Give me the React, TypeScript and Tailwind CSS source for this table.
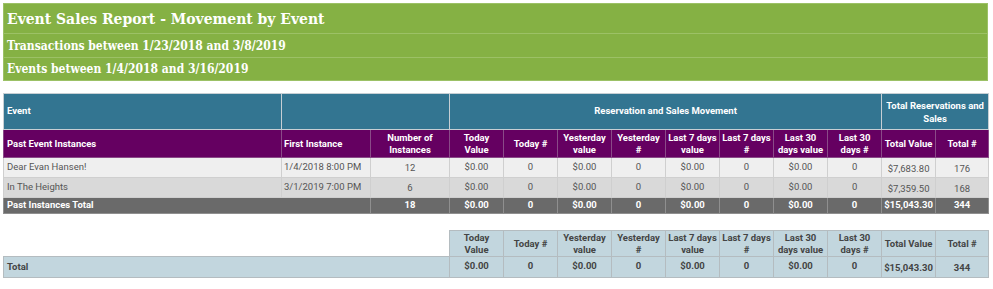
const movementCols = [
  ["Today", "Value"],
  ["Today #"],
  ["Yesterday", "value"],
  ["Yesterday", "#"],
  ["Last 7 days", "value"],
  ["Last 7 days", "#"],
  ["Last 30", "days value"],
  ["Last 30", "days #"],
];

const events = [
  { name: "Dear Evan Hansen!", first: "1/4/2018 8:00 PM", count: "12", total: "$7,683.80", totalNum: "176", bg: "bg-[#efefef]" },
  { name: "In The Heights", first: "3/1/2019 7:00 PM", count: "6", total: "$7,359.50", totalNum: "168", bg: "bg-[#d9d9d9]" },
];

const zeroRow = ["$0.00", "0", "$0.00", "0", "$0.00", "0", "$0.00", "0"];

function Cols() {
  return (
    <colgroup>
      <col className="w-[278px]" />
      <col className="w-[89px]" />
      <col className="w-[79px]" />
      {Array.from({ length: 9 }).map((_, i) => (
        <col key={i} className="w-[54px]" />
      ))}
      <col className="w-[53px]" />
    </colgroup>
  );
}

function Label({ lines }: { lines: string[] }) {
  return (
    <>
      {lines.map((l, i) => (
        <span key={i} className="block whitespace-nowrap">
          {l}
        </span>
      ))}
    </>
  );
}

export default function App() {
  return (
    <div className="w-[993px] h-[289px] bg-white px-[3px] pt-[3px] font-['Roboto',sans-serif] text-[9.5px]">
      {/* report banner */}
      <div className="w-[985px] bg-[#85b144] text-white font-['DejaVu_Serif_Condensed','DejaVu_Serif',serif] font-bold border border-[#9cc166]">
        <div className="h-[30px] flex items-center px-[3px] text-[15.5px] border-b border-[#9cc166]">
          Event Sales Report - Movement by Event
        </div>
        <div className="h-[24px] flex items-center px-[3px] text-[12px] border-b border-[#9cc166]">
          Transactions between 1/23/2018 and 3/8/2019
        </div>
        <div className="h-[22px] flex items-center px-[3px] text-[12px]">
          Events between 1/4/2018 and 3/16/2019
        </div>
      </div>

      {/* movement by event */}
      <table className="mt-[12px] w-[986px] table-fixed border-collapse">
        <Cols />
        <thead>
          <tr className="h-[36px] bg-[#337591] text-white font-bold">
            <th className="border border-[#c7cfd4] text-left px-[3px]">Event</th>
            <th colSpan={2} className="border border-[#c7cfd4]"></th>
            <th colSpan={8} className="border border-[#c7cfd4] text-center">
              Reservation and Sales Movement
            </th>
            <th colSpan={2} className="border border-[#c7cfd4] text-center leading-[13px] px-[1px]">
              Total Reservations and Sales
            </th>
          </tr>
          <tr className="h-[28px] bg-[#650061] text-white font-bold leading-[12px]">
            <th className="border border-[#8a4a88] text-left px-[3px]">Past Event Instances</th>
            <th className="border border-[#8a4a88] text-left px-[2px]">First Instance</th>
            <th className="border border-[#8a4a88] text-center px-[2px]">Number of Instances</th>
            {movementCols.map((c) => (
              <th key={c.join()} className="border border-[#8a4a88] text-center px-0">
                <Label lines={c} />
              </th>
            ))}
            <th className="border border-[#8a4a88] text-center px-0">Total Value</th>
            <th className="border border-[#8a4a88] text-center">Total #</th>
          </tr>
        </thead>
        <tbody className="text-[#555]">
          {events.map((e) => (
            <tr key={e.name} className={`h-[20px] ${e.bg}`}>
              <td className="border border-[#cfcfcf] px-[3px]">{e.name}</td>
              <td className="border border-[#cfcfcf] px-[2px]">{e.first}</td>
              <td className="border border-[#cfcfcf] text-center pt-[2px]">{e.count}</td>
              {zeroRow.map((v, i) => (
                <td key={i} className="border border-[#cfcfcf] text-center align-top pt-[2px]">
                  {v}
                </td>
              ))}
              <td className="border border-[#cfcfcf] text-center pt-[3px]">{e.total}</td>
              <td className="border border-[#cfcfcf] text-center pt-[3px]">{e.totalNum}</td>
            </tr>
          ))}
          <tr className="h-[16px] bg-[#6a6a6a] text-white font-bold">
            <td colSpan={2} className="border border-[#8f8f8f] px-[3px]">Past Instances Total</td>
            <td className="border border-[#8f8f8f] text-center">18</td>
            {zeroRow.map((v, i) => (
              <td key={i} className="border border-[#8f8f8f] text-center">
                {v}
              </td>
            ))}
            <td className="border border-[#8f8f8f] text-center">$15,043.30</td>
            <td className="border border-[#8f8f8f] text-center">344</td>
          </tr>
        </tbody>
      </table>

      {/* grand total */}
      <table className="mt-[16px] w-[986px] table-fixed border-collapse text-[#444] font-bold">
        <Cols />
        <tbody>
          <tr className="h-[26px] leading-[12px]">
            <td colSpan={3} className="bg-white"></td>
            {movementCols.map((c) => (
              <td key={c.join()} className="bg-[#c2d6de] border border-[#b4bcc0] text-center px-0">
                <Label lines={c} />
              </td>
            ))}
            <td className="bg-[#c2d6de] border border-[#b4bcc0] text-center px-0">Total Value</td>
            <td className="bg-[#c2d6de] border border-[#b4bcc0] text-center">Total #</td>
          </tr>
          <tr className="h-[21px] bg-[#c2d6de]">
            <td colSpan={3} className="border border-[#b4bcc0] px-[3px]">Total</td>
            {zeroRow.map((v, i) => (
              <td key={i} className="border border-[#b4bcc0] text-center align-top pt-[2px]">
                {v}
              </td>
            ))}
            <td className="border border-[#b4bcc0] text-center pt-[3px]">$15,043.30</td>
            <td className="border border-[#b4bcc0] text-center pt-[3px]">344</td>
          </tr>
        </tbody>
      </table>
    </div>
  );
}
